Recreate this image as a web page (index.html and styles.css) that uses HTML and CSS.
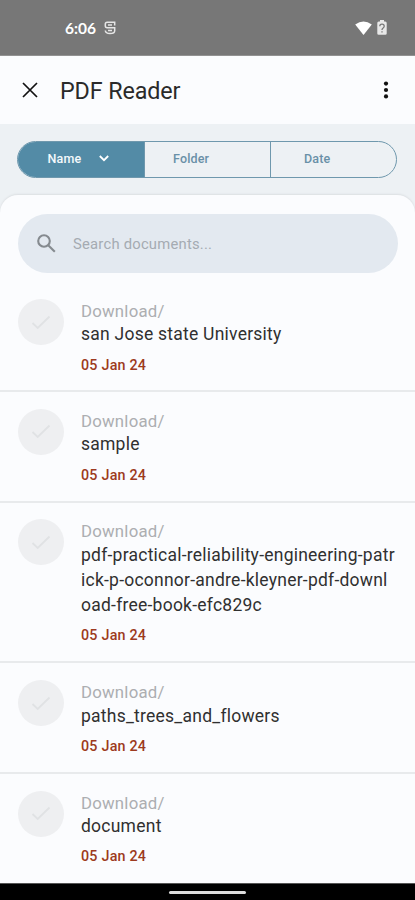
FILE: index.html
```html
<!DOCTYPE html>
<html lang="en">
<head>
<meta charset="utf-8">
<title>PDF Reader</title>
<link rel="stylesheet" href="styles.css">
</head>
<body>
<div class="screen">
  <div class="status">
    <span class="time">6:06</span>
    <svg class="s-icon" width="12" height="14" viewBox="0 0 12 14" fill="none" stroke="#e6e6e6" stroke-width="1.5"><path d="M10.7 4.5V1.3H3.2Q1.3 1.3 1.3 3.2V4.7Q1.3 6.7 3.2 6.7H10.7V9.8Q10.7 12.6 6 12.6Q1.6 12.6 1.3 9.5M4 4H8M4 9.5H8"/></svg>
    <svg class="wifi" width="17" height="14" viewBox="0 0 17 14" fill="#fff"><path d="M8.5 14L0.2 3.6Q8.5-2.8 16.8 3.6Z"/></svg>
    <svg class="battery" width="10" height="15" viewBox="0 0 10 15"><path d="M3 0H7V1.5H8.3Q9.7 1.5 9.7 3V13.4Q9.7 14.7 8.3 14.7H1.7Q.3 14.7 .3 13.4V3Q.3 1.5 1.7 1.5H3Z" fill="#e8e8e8"/><path d="M2.8 6.3Q2.8 4.2 5 4.2T7.2 6.2Q7.2 7.3 5.9 8.2Q5 8.8 5 10M5 11.2V12.6" fill="none" stroke="#777" stroke-width="1.3"/></svg>
  </div>
  <header class="appbar">
    <svg class="close" width="16" height="16" viewBox="0 0 16 16" stroke="#111" stroke-width="1.7"><path d="M1 1L15 15M15 1L1 15"/></svg>
    <h1>PDF Reader</h1>
    <svg class="more" width="6" height="18" viewBox="0 0 6 18" fill="#111"><circle cx="3" cy="2.6" r="2.1"/><circle cx="3" cy="9" r="2.1"/><circle cx="3" cy="15.4" r="2.1"/></svg>
  </header>
  <nav class="sort">
    <div class="tabs">
      <div class="tab active"><span>Name</span><svg width="10" height="7" viewBox="0 0 10 7" fill="none" stroke="#fff" stroke-width="1.8"><path d="M.8 1L5 5.2L9.2 1"/></svg></div>
      <div class="tab"><span>Folder</span></div>
      <div class="tab"><span>Date</span></div>
    </div>
  </nav>
  <main class="sheet">
    <div class="search">
      <svg width="19" height="19" viewBox="0 0 19 19" fill="none" stroke="#858a8f" stroke-width="2.1"><circle cx="7" cy="7" r="5.8"/><path d="M11.2 11.2L17.8 17.8"/></svg>
      <span>Search documents...</span>
    </div>
    <ul class="list">
      <li><div class="check"><svg width="20" height="15" viewBox="0 0 20 15"><path d="M1.5 8L6.7 13L18.5 1.5"/></svg></div><div class="info"><div class="folder">Download/</div><div class="name">san Jose state University</div><div class="date">05 Jan 24</div></div></li>
      <li><div class="check"><svg width="20" height="15" viewBox="0 0 20 15"><path d="M1.5 8L6.7 13L18.5 1.5"/></svg></div><div class="info"><div class="folder">Download/</div><div class="name">sample</div><div class="date">05 Jan 24</div></div></li>
      <li><div class="check"><svg width="20" height="15" viewBox="0 0 20 15"><path d="M1.5 8L6.7 13L18.5 1.5"/></svg></div><div class="info"><div class="folder">Download/</div><div class="name">pdf-practical-reliability-engineering-patr<br>ick-p-oconnor-andre-kleyner-pdf-downl<br>oad-free-book-efc829c</div><div class="date">05 Jan 24</div></div></li>
      <li><div class="check"><svg width="20" height="15" viewBox="0 0 20 15"><path d="M1.5 8L6.7 13L18.5 1.5"/></svg></div><div class="info"><div class="folder">Download/</div><div class="name">paths_trees_and_flowers</div><div class="date">05 Jan 24</div></div></li>
      <li><div class="check"><svg width="20" height="15" viewBox="0 0 20 15"><path d="M1.5 8L6.7 13L18.5 1.5"/></svg></div><div class="info"><div class="folder">Download/</div><div class="name">document</div><div class="date">05 Jan 24</div></div></li>
    </ul>
  </main>
  <footer class="navbar"><div class="handle"></div></footer>
</div>
</body>
</html>
```
FILE: styles.css
```css
* { box-sizing: border-box; }
body { margin: 0; font-family: Roboto, "Liberation Sans", sans-serif; background: #fbfcfe; }
.screen { width: 415px; height: 900px; display: flex; flex-direction: column; overflow: hidden; }
.status { height: 56px; flex: none; background: #777; border-bottom: 1px solid #929292; display: flex; align-items: center; padding: 0 28px 0 65px; color: #fff; }
.time { font: 700 15.5px/20px Lato, sans-serif; width: 39px; white-space: nowrap; }
.wifi { margin-left: auto; margin-right: 5px; }
.appbar { height: 68px; flex: none; display: flex; align-items: center; padding: 0 26px 0 22px; background: #fbfcfe; }
.appbar h1 { margin: 2px auto 0 22px; font-size: 23.3px; font-weight: 400; letter-spacing: -.1px; color: #2a2a2a; white-space: nowrap; }
.sort { height: 71px; flex: none; background: #edf1f4; padding: 17px 18px 0 17px; }
.tabs { height: 37px; display: grid; grid-template-columns: 126px 126px 1fr; border: 1px solid #6f98ad; border-radius: 19px; overflow: hidden; color: #6990a7; font-size: 12.5px; font-weight: 500; letter-spacing: .15px; }
.tab { display: flex; align-items: center; padding: 0 0 2px 33px; }
.tab:nth-child(2) { padding-left: 28px; }
.tab + .tab { border-left: 1px solid #6f98ad; }
.tab.active { background: #538ba6; color: #f4f9fc; padding-left: 29.5px; gap: 17.5px; }
.sheet { flex: 1; min-height: 0; background: #fbfcfe; border-radius: 18px 18px 0 0; padding-top: 19px; box-shadow: 0 -1px 2px #dcdfe2, 0 -8px 0 10px #edf1f4; clip-path: inset(-3px 0 0 0); }
.search { height: 59px; margin: 0 17px 0 18px; background: #e3e9f0; border-radius: 30px; display: flex; align-items: center; padding-left: 19px; gap: 17px; color: #a5abb2; font-size: 14.8px; letter-spacing: .22px; }
.list { list-style: none; margin: 8px 0 0; padding: 0; }
.list li { display: flex; padding: 18px 0 0 18px; gap: 17px; height: 109.2px; }
.list li + li { height: 110.5px; border-top: 2px solid #e8eaec; padding-top: 16.8px; }
.list li:nth-child(3) { height: 160.8px; }
.check { flex: none; width: 46px; height: 46px; border-radius: 50%; background: #eeeff1; display: flex; align-items: center; justify-content: center; }
.check path { fill: none; stroke: #e0e2e4; stroke-width: 1.8; }
.info { white-space: nowrap; padding-top: 1px; }
.folder { font-size: 16.8px; line-height: 22px; letter-spacing: .22px; color: #acaeb1; }
.name { font-size: 17.5px; line-height: 25.2px; padding-top: .4px; letter-spacing: .24px; color: #303030; }
.date { font-size: 14.3px; line-height: 20px; margin-top: 7px; letter-spacing: .22px; font-weight: 500; color: #9d3a20; }
.navbar { flex: none; height: 17px; background: #000; display: flex; justify-content: center; padding-top: 7px; border-top: 1px solid #555; }
.handle { width: 77px; height: 3px; border-radius: 2px; background: #ddd; }
```
